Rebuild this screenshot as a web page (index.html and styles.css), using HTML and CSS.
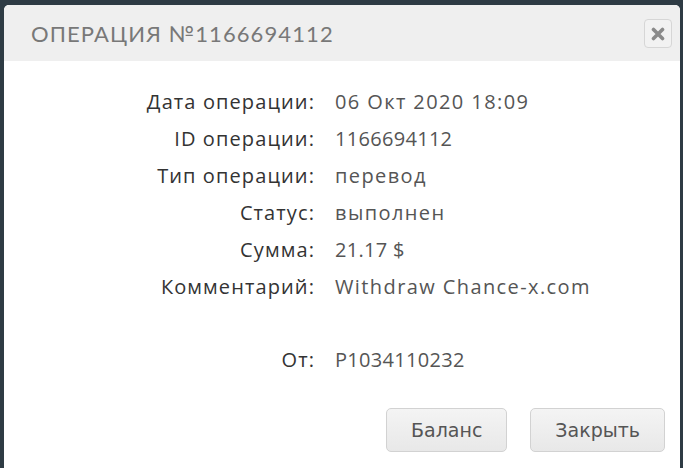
FILE: index.html
```html
<!DOCTYPE html>
<html lang="ru">
<head>
<meta charset="utf-8">
<link rel="stylesheet" href="styles.css">
</head>
<body>
<div class="modal">
  <div class="modal-header">
    <h3 class="title">ОПЕРАЦИЯ №1166694112</h3>
    <button class="close" aria-label="close">
      <svg width="14" height="14" viewBox="0 0 14 14"><path d="M2.5 2.5 L11.5 11.5 M11.5 2.5 L2.5 11.5" stroke="#8a8a8a" stroke-width="3.6" stroke-linecap="round"/></svg>
    </button>
  </div>
  <div class="modal-body">
    <div class="details">
      <div class="label">Дата операции:</div><div class="value">06 Окт 2020 18:09</div>
      <div class="label">ID операции:</div><div class="value num">1166694112</div>
      <div class="label">Тип операции:</div><div class="value">перевод</div>
      <div class="label">Статус:</div><div class="value">выполнен</div>
      <div class="label">Сумма:</div><div class="value num">21.17 $</div>
      <div class="label">Комментарий:</div><div class="value">Withdraw Chance-x.com</div>
      <div class="label spaced">От:</div><div class="value num spaced">P1034110232</div>
    </div>
  </div>
  <div class="modal-footer">
    <button class="btn">Баланс</button>
    <button class="btn">Закрыть</button>
  </div>
</div>
</body>
</html>
```
FILE: styles.css
```css
html, body {
  margin: 0;
  padding: 0;
  height: 100%;
  overflow: hidden;
}
body {
  background: #2e3b44;
  padding: 5px 3px 0 4px;
  box-sizing: border-box;
}
.modal {
  background: #fff;
  border-radius: 5px 5px 0 0;
  height: 463px;
  overflow: hidden;
}
.modal-header {
  background: #efefef;
  height: 56px;
  display: flex;
  align-items: center;
  justify-content: space-between;
  padding: 0 8px 0 27px;
}
.title {
  margin: 0;
  font-family: "Lato", "Open Sans", sans-serif;
  font-weight: 400;
  font-size: 22px;
  letter-spacing: 1.1px;
  color: #787878;
}
.close {
  width: 28px;
  height: 29px;
  border: 1px solid #d6d6d6;
  border-radius: 4px;
  background: #f2f2f2;
  display: flex;
  align-items: center;
  justify-content: center;
  padding: 0;
  margin-top: 1px;
}
.modal-body {
  padding: 22px 0 0 0;
}
.details {
  display: grid;
  grid-template-columns: 311px 1fr;
  column-gap: 20px;
  font-family: "Open Sans", sans-serif;
  font-size: 20px;
  line-height: 37px;
}
.label {
  text-align: right;
  color: #333;
  font-weight: 500;
  letter-spacing: 1.1px;
}
.value {
  color: #555;
  letter-spacing: 1.4px;
}
.value.num {
  letter-spacing: 0.3px;
}
.spaced {
  margin-top: 36px;
}
.modal-footer {
  display: flex;
  justify-content: flex-end;
  gap: 23px;
  padding: 30px 15px 0 0;
}
.btn {
  height: 44px;
  padding: 0 24px;
  font-family: "DejaVu Sans", sans-serif;
  font-size: 19px;
  color: #555;
  border: 1px solid #d2d2d2;
  border-radius: 5px;
  background: linear-gradient(#f4f4f4, #e8e8e8);
}
```
